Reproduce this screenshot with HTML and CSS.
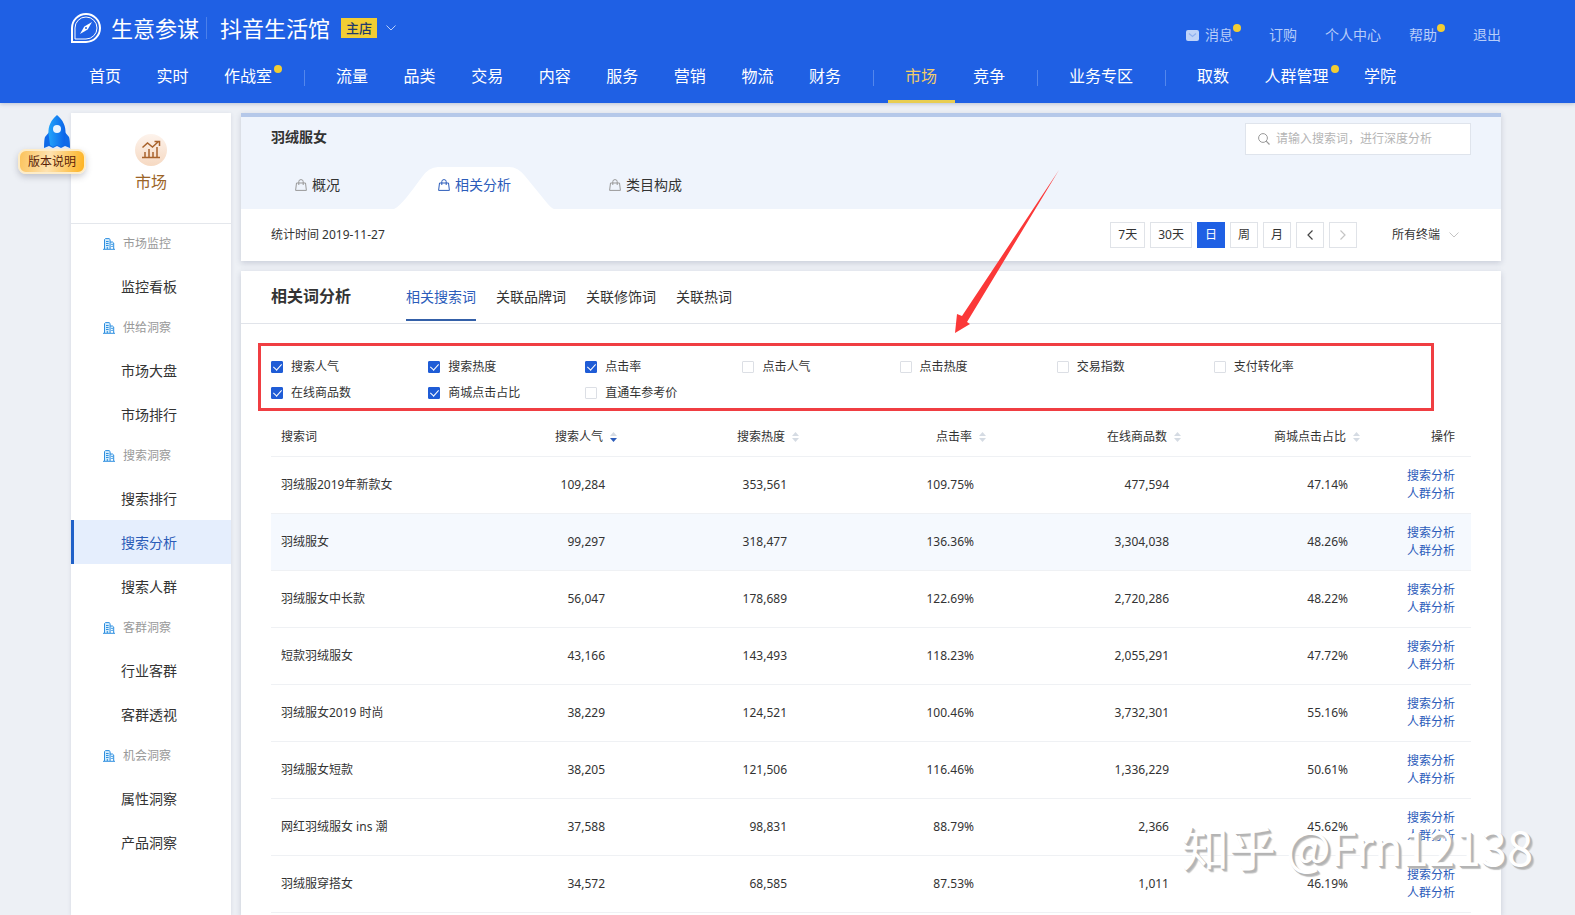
FILE: index.html
```html
<!DOCTYPE html>
<html lang="zh-CN">
<head>
<meta charset="utf-8">
<title>生意参谋 - 市场</title>
<link rel="stylesheet" href="styles.css">
</head>
<body>
<svg class="defs" aria-hidden="true">
  <symbol id="bag" viewBox="0 0 12 12"><path d="M1.5 4h9l.9 7.400H.6z M3.800 6V2.600a2.200 2 0 0 1 4.400 0V6" fill="none" stroke="currentColor"/></symbol>
  <symbol id="building" viewBox="0 0 12 12"><path d="M1.500 11V1.500L2.500 .6h3.600l1 .9V11M7.100 4h2.400l1.200 1V11M0 11.300h12" fill="#d3ecfc" stroke="#2f8fe0"/><path d="M3 3.500h2.600M3 5.500h2.600M3 7.500h2.600M8.300 6.500h1.400M8.300 8.500h1.400M4.300 9v2" stroke="#2f8fe0" fill="none"/></symbol>
  <symbol id="sort" viewBox="0 0 7 10"><path d="M3.500 0L7 4H0z" fill="#d5dbe3"/><path class="down" d="M3.500 10L7 6H0z"/></symbol>
  <symbol id="chevron" viewBox="0 0 10 6"><path d="M.5 .5L5 5 9.500 .5" fill="none" stroke="currentColor"/></symbol>
</svg>

<div class="page">
  <header class="header">
    <div class="topbar">
      <div class="brand">
        <svg class="logo" viewBox="0 0 30 30"><path d="M1 29V15A14 14 0 1 1 15 29z" fill="#1f60e4" stroke="#fff" stroke-width="2"/><path d="M4 26V15A11 11 0 1 1 15 26z" fill="none" stroke="#fff"/><path d="M21 9l-4.300 7.500L9 21l4.300-7.500z" fill="#fff"/><circle cx="15" cy="15" r="1" fill="#1f60e4"/></svg>
        <span class="brand-name">生意参谋</span>
        <span class="brand-line"></span>
        <span class="shop-name">抖音生活馆</span>
        <span class="shop-tag">主店</span>
        <svg class="shop-more" viewBox="0 0 10 6"><use href="#chevron"/></svg>
      </div>
      <div class="account">
        <a href="#"><svg class="mail" viewBox="0 0 13 11"><rect width="13" height="11" rx="2" fill="#bfd3f8"/><path d="M3 3.500l3.500 3L10 3.500" fill="none" stroke="#8fb0f0" stroke-width="1.300"/></svg>消息<i class="dot"></i></a>
        <a href="#">订购</a>
        <a href="#">个人中心</a>
        <a href="#">帮助<i class="dot"></i></a>
        <a href="#">退出</a>
      </div>
    </div>
    <nav class="nav">
      <div class="nav-group nav-home"><a href="#">首页</a><a href="#">实时</a><a href="#">作战室<i class="dot"></i></a></div>
      <span class="nav-line"></span>
      <div class="nav-group nav-data"><a href="#">流量</a><a href="#">品类</a><a href="#">交易</a><a href="#">内容</a><a href="#">服务</a><a href="#">营销</a><a href="#">物流</a><a href="#">财务</a></div>
      <span class="nav-line"></span>
      <div class="nav-group nav-market"><a href="#" class="active">市场</a><a href="#">竞争</a></div>
      <span class="nav-line"></span>
      <div class="nav-group"><a href="#">业务专区</a></div>
      <span class="nav-line"></span>
      <div class="nav-group nav-tools"><a href="#">取数</a><a href="#">人群管理<i class="dot"></i></a><a href="#">学院</a></div>
    </nav>
  </header>

  <div class="body">
    <aside class="sidebar">
      <div class="side-head">
        <svg class="side-icon" viewBox="0 0 32 32"><defs><linearGradient id="peach" x2="0" y2="1"><stop stop-color="#fdf3ec"/><stop offset="1" stop-color="#f6d9c2"/></linearGradient></defs><circle cx="16" cy="16" r="16" fill="url(#peach)"/><path d="M7 23.500h18M10 23v-5M14 23v-8M18 23v-5M22 23V13M7.500 13.500l5-4.500 5 4 6-5.500M19.500 7.500h5v4.500" fill="none" stroke="#a8622c" stroke-width="1.500"/></svg>
        <span>市场</span>
      </div>
      <h3><svg><use href="#building"/></svg>市场监控</h3>
      <a href="#">监控看板</a>
      <h3><svg><use href="#building"/></svg>供给洞察</h3>
      <a href="#">市场大盘</a>
      <a href="#">市场排行</a>
      <h3><svg><use href="#building"/></svg>搜索洞察</h3>
      <a href="#">搜索排行</a>
      <a href="#" class="active">搜索分析</a>
      <a href="#">搜索人群</a>
      <h3><svg><use href="#building"/></svg>客群洞察</h3>
      <a href="#">行业客群</a>
      <a href="#">客群透视</a>
      <h3><svg><use href="#building"/></svg>机会洞察</h3>
      <a href="#">属性洞察</a>
      <a href="#">产品洞察</a>
    </aside>

    <main class="main">
      <section class="panel query">
        <div class="query-top">
          <div class="query-title">
            <h1>羽绒服女</h1>
            <label class="search">
              <svg viewBox="0 0 12 12"><circle cx="5" cy="5" r="4.400" fill="none" stroke="#999"/><path d="M8.200 8.200l3.300 3.300" stroke="#999" stroke-width="1.200"/></svg>
              <input type="text" aria-label="搜索词" placeholder="请输入搜索词，进行深度分析">
            </label>
          </div>
          <div class="query-tabs">
            <a href="#"><svg><use href="#bag"/></svg>概况</a>
            <a href="#" class="active"><svg class="tab-shape" viewBox="0 0 160 42"><path d="M0 42C8 38 16 26 28 10Q35 0 44 0H115Q124 0 131 9L153 36Q157 41 160 42z" fill="#fff"/></svg><svg><use href="#bag"/></svg><span>相关分析</span></a>
            <a href="#"><svg><use href="#bag"/></svg>类目构成</a>
          </div>
        </div>
        <div class="query-time">
          <span class="time-label">统计时间 2019-11-27</span>
          <div class="periods">
            <button type="button">7天</button>
            <button type="button">30天</button>
            <button type="button" class="active">日</button>
            <button type="button">周</button>
            <button type="button">月</button>
            <button type="button" aria-label="前一天"><svg viewBox="0 0 6 10"><path d="M5.500 .5L1 5l4.500 4.500" fill="none" stroke="#444" stroke-width="1.200"/></svg></button>
            <button type="button" aria-label="后一天" disabled><svg viewBox="0 0 6 10"><path d="M.5 .5L5 5 .5 9.500" fill="none" stroke="#c4c4c4" stroke-width="1.200"/></svg></button>
          </div>
          <label class="terminal">
            <select aria-label="终端"><option>所有终端</option></select>
            <svg viewBox="0 0 10 6"><use href="#chevron"/></svg>
          </label>
        </div>
      </section>

      <section class="panel words">
        <div class="words-head">
          <h2>相关词分析</h2>
          <div class="words-tabs">
            <a href="#" class="active">相关搜索词</a>
            <a href="#">关联品牌词</a>
            <a href="#">关联修饰词</a>
            <a href="#">关联热词</a>
          </div>
        </div>
        <div class="words-body">
          <div class="filters">
            <label><input type="checkbox" checked>搜索人气</label>
            <label><input type="checkbox" checked>搜索热度</label>
            <label><input type="checkbox" checked>点击率</label>
            <label><input type="checkbox">点击人气</label>
            <label><input type="checkbox">点击热度</label>
            <label><input type="checkbox">交易指数</label>
            <label><input type="checkbox">支付转化率</label>
            <label><input type="checkbox" checked>在线商品数</label>
            <label><input type="checkbox" checked>商城点击占比</label>
            <label><input type="checkbox">直通车参考价</label>
            <svg class="arrow" viewBox="0 0 106 164"><path d="M106 0L14 152l3 2L2 163l2-19 5 2z" fill="#fb3838"/></svg>
          </div>
          <table>
            <colgroup><col class="c-word"><col class="c-pop"><col class="c-heat"><col class="c-rate"><col class="c-goods"><col class="c-share"><col class="c-act"></colgroup>
            <thead>
              <tr>
                <th>搜索词</th>
                <th><button type="button" class="sorted">搜索人气<svg><use href="#sort"/></svg></button></th>
                <th><button type="button">搜索热度<svg><use href="#sort"/></svg></button></th>
                <th><button type="button">点击率<svg><use href="#sort"/></svg></button></th>
                <th><button type="button">在线商品数<svg><use href="#sort"/></svg></button></th>
                <th><button type="button">商城点击占比<svg><use href="#sort"/></svg></button></th>
                <th>操作</th>
              </tr>
            </thead>
            <tbody>
              <tr><td>羽绒服2019年新款女</td><td>109,284</td><td>353,561</td><td>109.75%</td><td>477,594</td><td>47.14%</td><td><a href="#">搜索分析</a><a href="#">人群分析</a></td></tr>
              <tr class="hover"><td>羽绒服女</td><td>99,297</td><td>318,477</td><td>136.36%</td><td>3,304,038</td><td>48.26%</td><td><a href="#">搜索分析</a><a href="#">人群分析</a></td></tr>
              <tr><td>羽绒服女中长款</td><td>56,047</td><td>178,689</td><td>122.69%</td><td>2,720,286</td><td>48.22%</td><td><a href="#">搜索分析</a><a href="#">人群分析</a></td></tr>
              <tr><td>短款羽绒服女</td><td>43,166</td><td>143,493</td><td>118.23%</td><td>2,055,291</td><td>47.72%</td><td><a href="#">搜索分析</a><a href="#">人群分析</a></td></tr>
              <tr><td>羽绒服女2019 时尚</td><td>38,229</td><td>124,521</td><td>100.46%</td><td>3,732,301</td><td>55.16%</td><td><a href="#">搜索分析</a><a href="#">人群分析</a></td></tr>
              <tr><td>羽绒服女短款</td><td>38,205</td><td>121,506</td><td>116.46%</td><td>1,336,229</td><td>50.61%</td><td><a href="#">搜索分析</a><a href="#">人群分析</a></td></tr>
              <tr><td>网红羽绒服女 ins 潮</td><td>37,588</td><td>98,831</td><td>88.79%</td><td>2,366</td><td>45.62%</td><td><a href="#">搜索分析</a><a href="#">人群分析</a></td></tr>
              <tr><td>羽绒服穿搭女</td><td>34,572</td><td>68,585</td><td>87.53%</td><td>1,011</td><td>46.19%</td><td><a href="#">搜索分析</a><a href="#">人群分析</a></td></tr>
            </tbody>
          </table>
        </div>
      </section>
    </main>

    <a href="#" class="version">
      <svg viewBox="0 0 26 34"><defs><linearGradient id="hull"><stop stop-color="#22a4fb"/><stop offset="1" stop-color="#0b62e8"/></linearGradient></defs><path d="M6 16L1 22Q0 25 0 33l5-2 4 2 4-2 4 2 4-2 5 2Q26 25 25 22L20 16z" fill="#0f6ae8"/><path d="M13 0C19 5 22 11 21.500 19L20 30l-3 2-4-2-4 2-3-2L4.500 19C4 11 7 5 13 0z" fill="url(#hull)"/><circle cx="13" cy="14" r="4" fill="#e9f4ff"/></svg>
      <span>版本说明</span>
    </a>
    <div class="watermark">知乎 @Frn12138</div>
  </div>
</div>
</body>
</html>
```
FILE: styles.css
```css
* { box-sizing: border-box; }
body {
  margin: 0;
  background: #edf0f5;
  color: #333;
  font: 12px/18px "Noto Sans", "Noto Sans CJK SC", sans-serif;
}
a { color: inherit; text-decoration: none; }
h1, h2, h3 { margin: 0; }
button, input, select { font: inherit; color: inherit; }
.defs { position: absolute; width: 0; height: 0; }
.page { display: flex; flex-direction: column; min-height: 100vh; }

/* header */
.header {
  height: 103px;
  padding: 0 74px 0 71px;
  background: #1f60e4;
  color: #fff;
  box-shadow: 0 1px 4px rgba(40, 60, 110, .25);
}
.topbar { display: flex; justify-content: space-between; align-items: flex-start; height: 58px; }
.brand { display: flex; align-items: center; height: 56px; font-size: 22px; line-height: 30px; }
.logo { width: 30px; height: 30px; margin-right: 10px; }
.brand-line { width: 1px; height: 22px; margin: 0 13px 0 7px; background: #4b80ea; }
.shop-tag {
  margin: 0 9px 0 11px;
  padding: 0 5px;
  background: #f2cd33;
  color: #233a6b;
  font-size: 13px;
  font-weight: 500;
  line-height: 20px;
}
.shop-more { width: 10px; height: 6px; color: #b9cff8; }
.account {
  display: flex;
  gap: 28px;
  padding-top: 24px;
  color: #b7cdf9;
  font-size: 14px;
  line-height: 22px;
}
.account a { display: flex; align-items: center; }
.mail { width: 13px; height: 11px; margin-right: 6px; }
.dot { width: 8px; height: 8px; border-radius: 50%; background: #f2cd33; }
.account .dot { align-self: flex-start; }
.nav {
  display: flex;
  align-items: center;
  height: 45px;
  padding-left: 18px;
  font-size: 16px;
  line-height: 24px;
}
.nav-group { display: flex; justify-content: space-between; flex: none; height: 45px; align-items: center; padding-bottom: 10px; }
.nav-home { width: 183px; }
.nav-data { width: 505px; }
.nav-market { width: 100px; }
.nav-tools { width: 199px; }
.nav a { position: relative; }
.nav .dot { position: absolute; left: 100%; top: 1px; margin-left: 2px; }
.nav .active { color: #f2cd6a; }
.nav .active::after {
  content: "";
  position: absolute;
  left: -17px;
  right: -18px;
  bottom: -15px;
  height: 3px;
  background: #e9cd50;
}
.nav-line { width: 1px; height: 16px; margin: 0 31px 6px 32px; background: #5487ec; }

/* body */
.body { position: relative; display: flex; flex: 1; gap: 10px; padding: 10px 74px 0 71px; }
.sidebar { flex: none; width: 160px; background: #fff; box-shadow: 0 1px 4px rgba(50, 60, 100, .12); }
.side-head {
  display: flex;
  flex-direction: column;
  align-items: center;
  gap: 4px;
  height: 111px;
  padding-top: 21px;
  border-bottom: 1px solid #e4e7ec;
  color: #9b6427;
  font-size: 16px;
  line-height: 24px;
}
.side-icon { width: 32px; height: 32px; }
.sidebar h3 {
  display: flex;
  align-items: center;
  gap: 8px;
  height: 40px;
  padding-left: 32px;
  color: #999;
  font-size: 12px;
  font-weight: 400;
}
.sidebar h3 svg { width: 12px; height: 12px; }
.sidebar a { display: block; height: 44px; padding-left: 50px; font-size: 14px; line-height: 46px; }
.sidebar .active { padding-left: 47px; border-left: 3px solid #1f60c8; background: #e5eefd; color: #2b5cb8; }
.main { display: flex; flex: 1; flex-direction: column; gap: 10px; min-width: 0; }
.panel { background: #fff; box-shadow: 0 2px 6px rgba(50, 60, 100, .2); }

/* query panel */
.query-top { display: flex; flex-direction: column; height: 96px; border-top: 4px solid #b5c8e9; background: #eff4fc; }
.query-title { display: flex; justify-content: space-between; padding: 6px 30px 0; }
.query-title h1 { padding-top: 4px; font-size: 14px; line-height: 20px; }
.search {
  display: flex;
  align-items: center;
  width: 226px;
  height: 32px;
  padding-left: 12px;
  gap: 6px;
  border: 1px solid #dfe4ec;
  background: #fff;
}
.search svg { width: 12px; height: 12px; }
.search input { flex: 1; min-width: 0; padding: 0; border: 0; outline: 0; background: none; }
.search input::placeholder { color: #b5b5b5; }
.query-tabs { display: flex; gap: 98px; margin-top: auto; padding: 0 54px; font-size: 14px; line-height: 20px; }
.query-tabs a { position: relative; display: flex; align-items: center; gap: 5px; height: 42px; padding-bottom: 7px; }
.query-tabs svg { width: 12px; height: 12px; color: #999; }
.query-tabs .active { color: #2c5cba; }
.query-tabs .active svg { position: relative; color: #2c5cba; }
.query-tabs .active span { position: relative; }
.query-tabs .active .tab-shape { position: absolute; left: -44px; top: 0; width: 160px; height: 42px; }
.query-time { display: flex; align-items: center; height: 52px; padding: 0 42px 0 30px; }
.time-label { margin-right: auto; }
.periods { display: flex; gap: 5px; }
.periods button {
  display: flex;
  align-items: center;
  justify-content: center;
  min-width: 28px;
  height: 26px;
  padding: 0 7px;
  border: 1px solid #e0e3e8;
  background: #fff;
}
.periods svg { width: 6px; height: 10px; }
.periods .active { border-color: #1f60e4; background: #1f60e4; color: #fff; }
.terminal { display: flex; align-items: center; gap: 8px; margin-left: 35px; }
.terminal select { padding: 0; border: 0; background: none; appearance: none; }
.terminal svg { width: 10px; height: 6px; color: #c4c4c4; }

/* words panel */
.words { flex: 1; }
.words-head { display: flex; gap: 55px; height: 53px; padding: 0 30px; border-bottom: 1px solid #e1e4ea; }
.words-head h2 { font-size: 16px; line-height: 50px; }
.words-tabs { display: flex; gap: 20px; font-size: 14px; line-height: 48px; padding-top: 2px; }
.words-tabs a { height: 48px; }
.words-tabs .active { border-bottom: 2px solid #3460a8; color: #2c5cba; }
.words-body { padding: 30px 30px 0; }
.filters { position: relative; display: grid; grid-template-columns: repeat(7, 1fr); padding-right: 100px; line-height: 26px; }
.filters::after {
  content: "";
  position: absolute;
  inset: -11px 37px -5px -13px;
  border: 3px solid #f03e42;
  pointer-events: none;
}
.filters label { display: flex; align-items: center; gap: 8px; }
.filters input {
  width: 12px;
  height: 12px;
  margin: 0;
  border: 1px solid #dcdfe5;
  border-radius: 1px;
  appearance: none;
}
.filters input:checked { border-color: #1f5cd6; background: #1f5cd6; }
.filters input:checked::before {
  content: "";
  display: block;
  width: 4px;
  height: 7px;
  margin: 0 3px;
  border: solid #fff;
  border-width: 0 1px 1px 0;
  transform: rotate(42deg);
}
.arrow { position: absolute; left: 682px; top: -184px; width: 106px; height: 164px; z-index: 2; pointer-events: none; }
table { width: 100%; margin-top: 11px; border-collapse: separate; border-spacing: 0; table-layout: fixed; }
.c-word { width: 164px; }
.c-pop { width: 182px; }
.c-heat { width: 182px; }
.c-rate { width: 187px; }
.c-goods { width: 195px; }
.c-share { width: 179px; }
.c-act { width: 111px; }
th, td { padding: 0 12px 0 0; border-bottom: 1px solid #eff1f4; text-align: right; font-weight: 400; white-space: nowrap; }
th { height: 40px; padding-right: 0; }
td { height: 57px; }
th:first-child, td:first-child { padding-left: 10px; text-align: left; }
th:last-child, td:last-child { padding-right: 16px; }
th button { display: inline-flex; align-items: center; gap: 7px; padding: 0; border: 0; background: none; }
th svg { width: 7px; height: 10px; fill: #d5dbe3; }
th .sorted svg { fill: #2c5cba; }
td a { display: block; color: #2c5cba; }
.hover { background: #f5f9fe; }

/* overlays */
.version { position: absolute; left: 18px; top: 12px; display: flex; flex-direction: column; align-items: center; color: #5a1e08; }
.version svg { width: 26px; height: 34px; margin-left: 10px; }
.version span {
  padding: 1px 8px;
  border: 2px solid #fdecc8;
  border-radius: 8px;
  background: linear-gradient(100deg, #fbc35c, #fee2b0 45%, #fdb21f);
  line-height: 19px;
  box-shadow: 0 3px 6px rgba(60, 60, 80, .25);
}
.watermark {
  position: absolute;
  right: 42px;
  bottom: 36px;
  color: #fff;
  font: 47px/66px "Noto Sans CJK SC", sans-serif;
  text-shadow: 1px 1px 0 #b4b4b4, 2px 2px 0 #b4b4b4, 3px 3px 1px #c4c4c4;
  white-space: nowrap;
  pointer-events: none;
}
```
